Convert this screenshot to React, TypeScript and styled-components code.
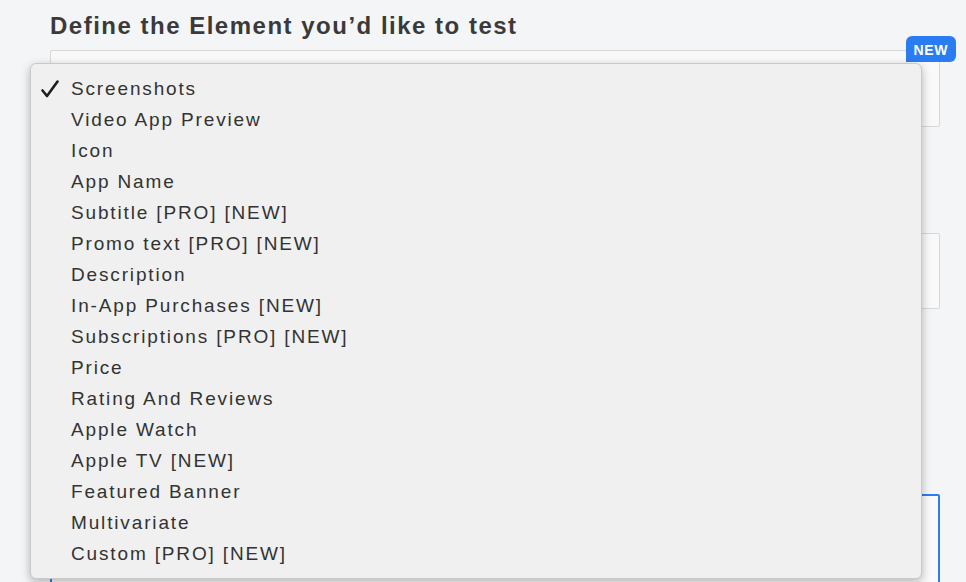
import styled, { createGlobalStyle } from "styled-components";

const GlobalStyle = createGlobalStyle`
  html, body {
    margin: 0;
    padding: 0;
    background: #f4f5f7;
  }
  body {
    font-family: "Liberation Sans", Arial, sans-serif;
    overflow: hidden;
  }
`;

const OPTIONS = [
  "Screenshots",
  "Video App Preview",
  "Icon",
  "App Name",
  "Subtitle [PRO] [NEW]",
  "Promo text [PRO] [NEW]",
  "Description",
  "In-App Purchases [NEW]",
  "Subscriptions [PRO] [NEW]",
  "Price",
  "Rating And Reviews",
  "Apple Watch",
  "Apple TV [NEW]",
  "Featured Banner",
  "Multivariate",
  "Custom [PRO] [NEW]",
];

const Page = styled.div`
  width: 966px;
  height: 582px;
  box-sizing: border-box;
  padding: 12px 26px 0 50px;
  display: flex;
  flex-direction: column;
  overflow: hidden;
`;

const Heading = styled.h2`
  margin: 0 0 10px;
  flex-shrink: 0;
  font-size: 24px;
  line-height: 28px;
  font-weight: 700;
  letter-spacing: 1.5px;
  color: #3a3a3a;
`;

const FieldWrap = styled.div`
  position: relative;
  flex-shrink: 0;
`;

const Field = styled.div<{ $height: number; $active?: boolean }>`
  height: ${(p) => p.$height}px;
  flex-shrink: 0;
  box-sizing: border-box;
  background: #f9f9fa;
  border: ${(p) => (p.$active ? "2px solid #2f7bf0" : "1px solid #d8d8d8")};
  border-radius: 2px;
`;

const Badge = styled.span`
  position: absolute;
  top: -14px;
  right: -16px;
  background: #2a7cf2;
  color: #fff;
  font-size: 14px;
  font-weight: 700;
  line-height: 14px;
  padding: 7px 8px 5px;
  border-radius: 6px 6px 6px 0;
  letter-spacing: 0.6px;
`;

const Spacer = styled.div<{ $h: number }>`
  height: ${(p) => p.$h}px;
  flex-shrink: 0;
`;

const Menu = styled.ul`
  position: absolute;
  top: 13px;
  left: -20px;
  width: 892px;
  margin: 0;
  padding: 9px 0 9px;
  list-style: none;
  box-sizing: border-box;
  background: #f0f0f0;
  border: 1px solid #c9c9c9;
  border-radius: 6px;
  box-shadow: 0 3px 10px rgba(0, 0, 0, 0.28);
  z-index: 10;
`;

const Item = styled.li`
  display: flex;
  align-items: center;
  height: 31px;
  padding-left: 9px;
  font-size: 19px;
  letter-spacing: 1.85px;
  color: #333;
`;

const CheckCell = styled.span`
  width: 31px;
  height: 31px;
  display: flex;
  align-items: center;
`;

function CheckMark() {
  return (
    <svg width="20" height="18" viewBox="0 0 20 18">
      <path
        d="M2.5 10.5 L7 16 L17.5 1.5"
        fill="none"
        stroke="#1e1e1e"
        strokeWidth="2.6"
        strokeLinecap="round"
        strokeLinejoin="round"
      />
    </svg>
  );
}

export default function App() {
  return (
    <>
      <GlobalStyle />
      <Page>
        <Heading>Define the Element you’d like to test</Heading>
        <FieldWrap>
          <Field $height={77} />
          <Badge>NEW</Badge>
          <Menu>
            {OPTIONS.map((label, i) => (
              <Item key={label}>
                <CheckCell>{i === 0 && <CheckMark />}</CheckCell>
                {label}
              </Item>
            ))}
          </Menu>
        </FieldWrap>
        <Spacer $h={106} />
        <Field $height={76} />
        <Spacer $h={185} />
        <Field $height={120} $active />
      </Page>
    </>
  );
}
